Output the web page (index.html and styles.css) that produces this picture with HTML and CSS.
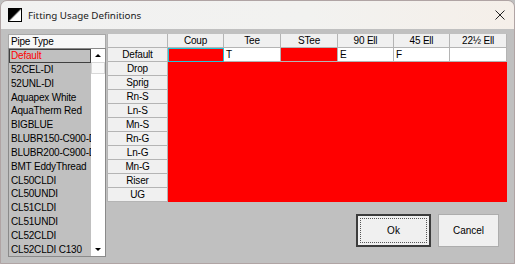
FILE: index.html
```html
<!DOCTYPE html>
<html>
<head>
<meta charset="utf-8">
<link rel="stylesheet" href="styles.css">
</head>
<body>
<div class="window">
  <div class="titlebar">
    <svg class="appicon" width="14" height="14" viewBox="0 0 14 14">
      <defs>
        <linearGradient id="g" x1="0" y1="0" x2="1" y2="1">
          <stop offset="0" stop-color="#000"/>
          <stop offset="0.45" stop-color="#000"/>
          <stop offset="0.55" stop-color="#fff"/>
          <stop offset="1" stop-color="#fff"/>
        </linearGradient>
      </defs>
      <rect x="0.5" y="0.5" width="13" height="13" fill="url(#g)" stroke="#000"/>
    </svg>
    <span class="title">Fitting Usage Definitions</span>
    <svg class="close" width="10" height="10" viewBox="0 0 10 10">
      <path d="M0.5 0.5 L9.5 9.5 M9.5 0.5 L0.5 9.5" stroke="#222" stroke-width="1"/>
    </svg>
  </div>
  <div class="client">
    <div class="pipes">
      <div class="pipes-head">Pipe Type</div>
      <div class="pipes-list">
        <div class="items">
          <div class="item sel">Default</div>
          <div class="item">52CEL-DI</div>
          <div class="item">52UNL-DI</div>
          <div class="item">Aquapex White</div>
          <div class="item">AquaTherm Red</div>
          <div class="item">BIGBLUE</div>
          <div class="item">BLUBR150-C900-DI</div>
          <div class="item">BLUBR200-C900-DI</div>
          <div class="item">BMT EddyThread</div>
          <div class="item">CL50CLDI</div>
          <div class="item">CL50UNDI</div>
          <div class="item">CL51CLDI</div>
          <div class="item">CL51UNDI</div>
          <div class="item">CL52CLDI</div>
          <div class="item">CL52CLDI C130</div>
        </div>
        <div class="vscroll">
          <div class="sbtn"><span class="tri up"></span></div>
          <div class="thumb"></div>
          <div class="track"></div>
          <div class="sbtn"><span class="tri down"></span></div>
        </div>
      </div>
    </div>
    <div class="right">
      <div class="grid">
        <div class="hcell corner"></div>
        <div class="hcell">Coup</div>
        <div class="hcell">Tee</div>
        <div class="hcell">STee</div>
        <div class="hcell">90 Ell</div>
        <div class="hcell">45 Ell</div>
        <div class="hcell">22½ Ell</div>

        <div class="rh">Default</div>
        <div class="c red focus"></div>
        <div class="c white">T</div>
        <div class="c red"></div>
        <div class="c white">E</div>
        <div class="c white">F</div>
        <div class="c white"></div>

        <div class="rh">Drop</div><div class="fill"></div>
        <div class="rh">Sprig</div><div class="fill"></div>
        <div class="rh">Rn-S</div><div class="fill"></div>
        <div class="rh">Ln-S</div><div class="fill"></div>
        <div class="rh">Mn-S</div><div class="fill"></div>
        <div class="rh">Rn-G</div><div class="fill"></div>
        <div class="rh">Ln-G</div><div class="fill"></div>
        <div class="rh">Mn-G</div><div class="fill"></div>
        <div class="rh">Riser</div><div class="fill"></div>
        <div class="rh">UG</div><div class="fill"></div>
      </div>
      <div class="buttons">
        <button class="btn default"><span class="focusrect">Ok</span></button>
        <button class="btn">Cancel</button>
      </div>
    </div>
  </div>
</div>
</body>
</html>
```

FILE: styles.css
```css
* { box-sizing: border-box; }
html, body { margin: 0; padding: 0; }
body {
  width: 515px;
  height: 264px;
  overflow: hidden;
  background: #c0c0c0;
  font-family: "Liberation Sans", Arial, sans-serif;
  font-size: 10px;
  letter-spacing: -0.2px;
  color: #000;
}
.window {
  width: 515px;
  height: 264px;
  display: flex;
  flex-direction: column;
  background: #c0c0c0;
  border: 1px solid #b0a4a4;
  border-radius: 7px 7px 0 0;
  overflow: hidden;
}
.titlebar {
  height: 28px;
  flex: none;
  display: flex;
  align-items: center;
  padding-left: 7px;
  padding-right: 9px;
  background: linear-gradient(90deg, #f1f1f1 0%, #f2f2f0 60%, #f5efe9 100%);
}
.appicon { flex: none; }
.title {
  margin-left: 6px;
  font-family: "Noto Sans", "Open Sans", sans-serif;
  font-size: 9.8px;
  letter-spacing: 0;
  color: #1a1a1a;
  flex: 1;
}
.close { flex: none; }
.client {
  flex: 1;
  display: flex;
  padding: 5px 0 0 7px;
}
.pipes {
  width: 98px;
  display: flex;
  flex-direction: column;
}
.pipes-head {
  height: 14px;
  line-height: 13px;
  padding-left: 2px;
  background: #f8f8f8;
  border: 1px solid #a8a8a8;
  border-bottom: none;
}
.pipes-list {
  height: 209px;
  display: flex;
  border: 1px solid #8a8a8a;
  background: #c0c0c0;
}
.items {
  flex: 1;
  overflow: hidden;
  white-space: nowrap;
}
.item {
  height: 13.85px;
  line-height: 13px;
  padding-left: 2px;
}
.item.sel {
  color: #ff0000;
  border: 1px solid #404040;
  line-height: 11px;
  padding-left: 1px;
}
.vscroll {
  width: 14px;
  display: flex;
  flex-direction: column;
  background: #fff;
}
.sbtn {
  height: 13px;
  display: flex;
  align-items: center;
  justify-content: center;
  background: #fff;
}
.thumb {
  height: 12px;
  border: 1px solid #d8d8d8;
  background: #fafafa;
}
.track { flex: 1; }
.tri {
  width: 0; height: 0;
  border-left: 3px solid transparent;
  border-right: 3px solid transparent;
}
.tri.up { border-bottom: 3px solid #000; }
.tri.down { border-top: 3px solid #000; }
.right {
  display: flex;
  flex-direction: column;
  margin-left: 1px;
}
.grid {
  display: grid;
  grid-template-columns: 61px 56px 57px 57px 56px 56px 57px;
  grid-template-rows: repeat(12, 14px);
  width: 400px;
}
.hcell {
  background: #f0f0f0;
  border-right: 1px solid #b4b4b4;
  border-bottom: 1px solid #b4b4b4;
  text-align: center;
  line-height: 13px;
}
.hcell.corner { border-left: 1px solid #b4b4b4; }
.rh {
  grid-column: 1;
  background: #f0f0f0;
  border-left: 1px solid #b4b4b4;
  border-right: 1px solid #b4b4b4;
  border-bottom: 1px solid #b4b4b4;
  text-align: center;
  line-height: 13px;
}
.c {
  border-right: 1px solid #b4b4b4;
  border-bottom: 1px solid #b4b4b4;
  line-height: 13px;
  padding-left: 2px;
}
.c.red { background: #ff0000; }
.c.white { background: #fff; }
.c.focus { border: 1px solid #22c4d8; }
.fill {
  grid-column: 2 / span 6;
  background: #ff0000;
}
.buttons {
  display: flex;
  justify-content: flex-end;
  gap: 7px;
  margin-top: 12px;
  padding-right: 8px;
}
.btn {
  height: 33px;
  background: #f0f0f0;
  border: 1px solid #adadad;
  font-family: "Liberation Sans", Arial, sans-serif;
  font-size: 10px;
  color: #000;
  padding: 0;
}
.btn.default {
  width: 75px;
  border: 2px solid #3c3c3c;
  padding: 2px;
  display: flex;
}
.focusrect {
  flex: 1;
  display: flex;
  align-items: center;
  justify-content: center;
  border: 1px dotted #555;
}
.btn:not(.default) { width: 61px; }
```
